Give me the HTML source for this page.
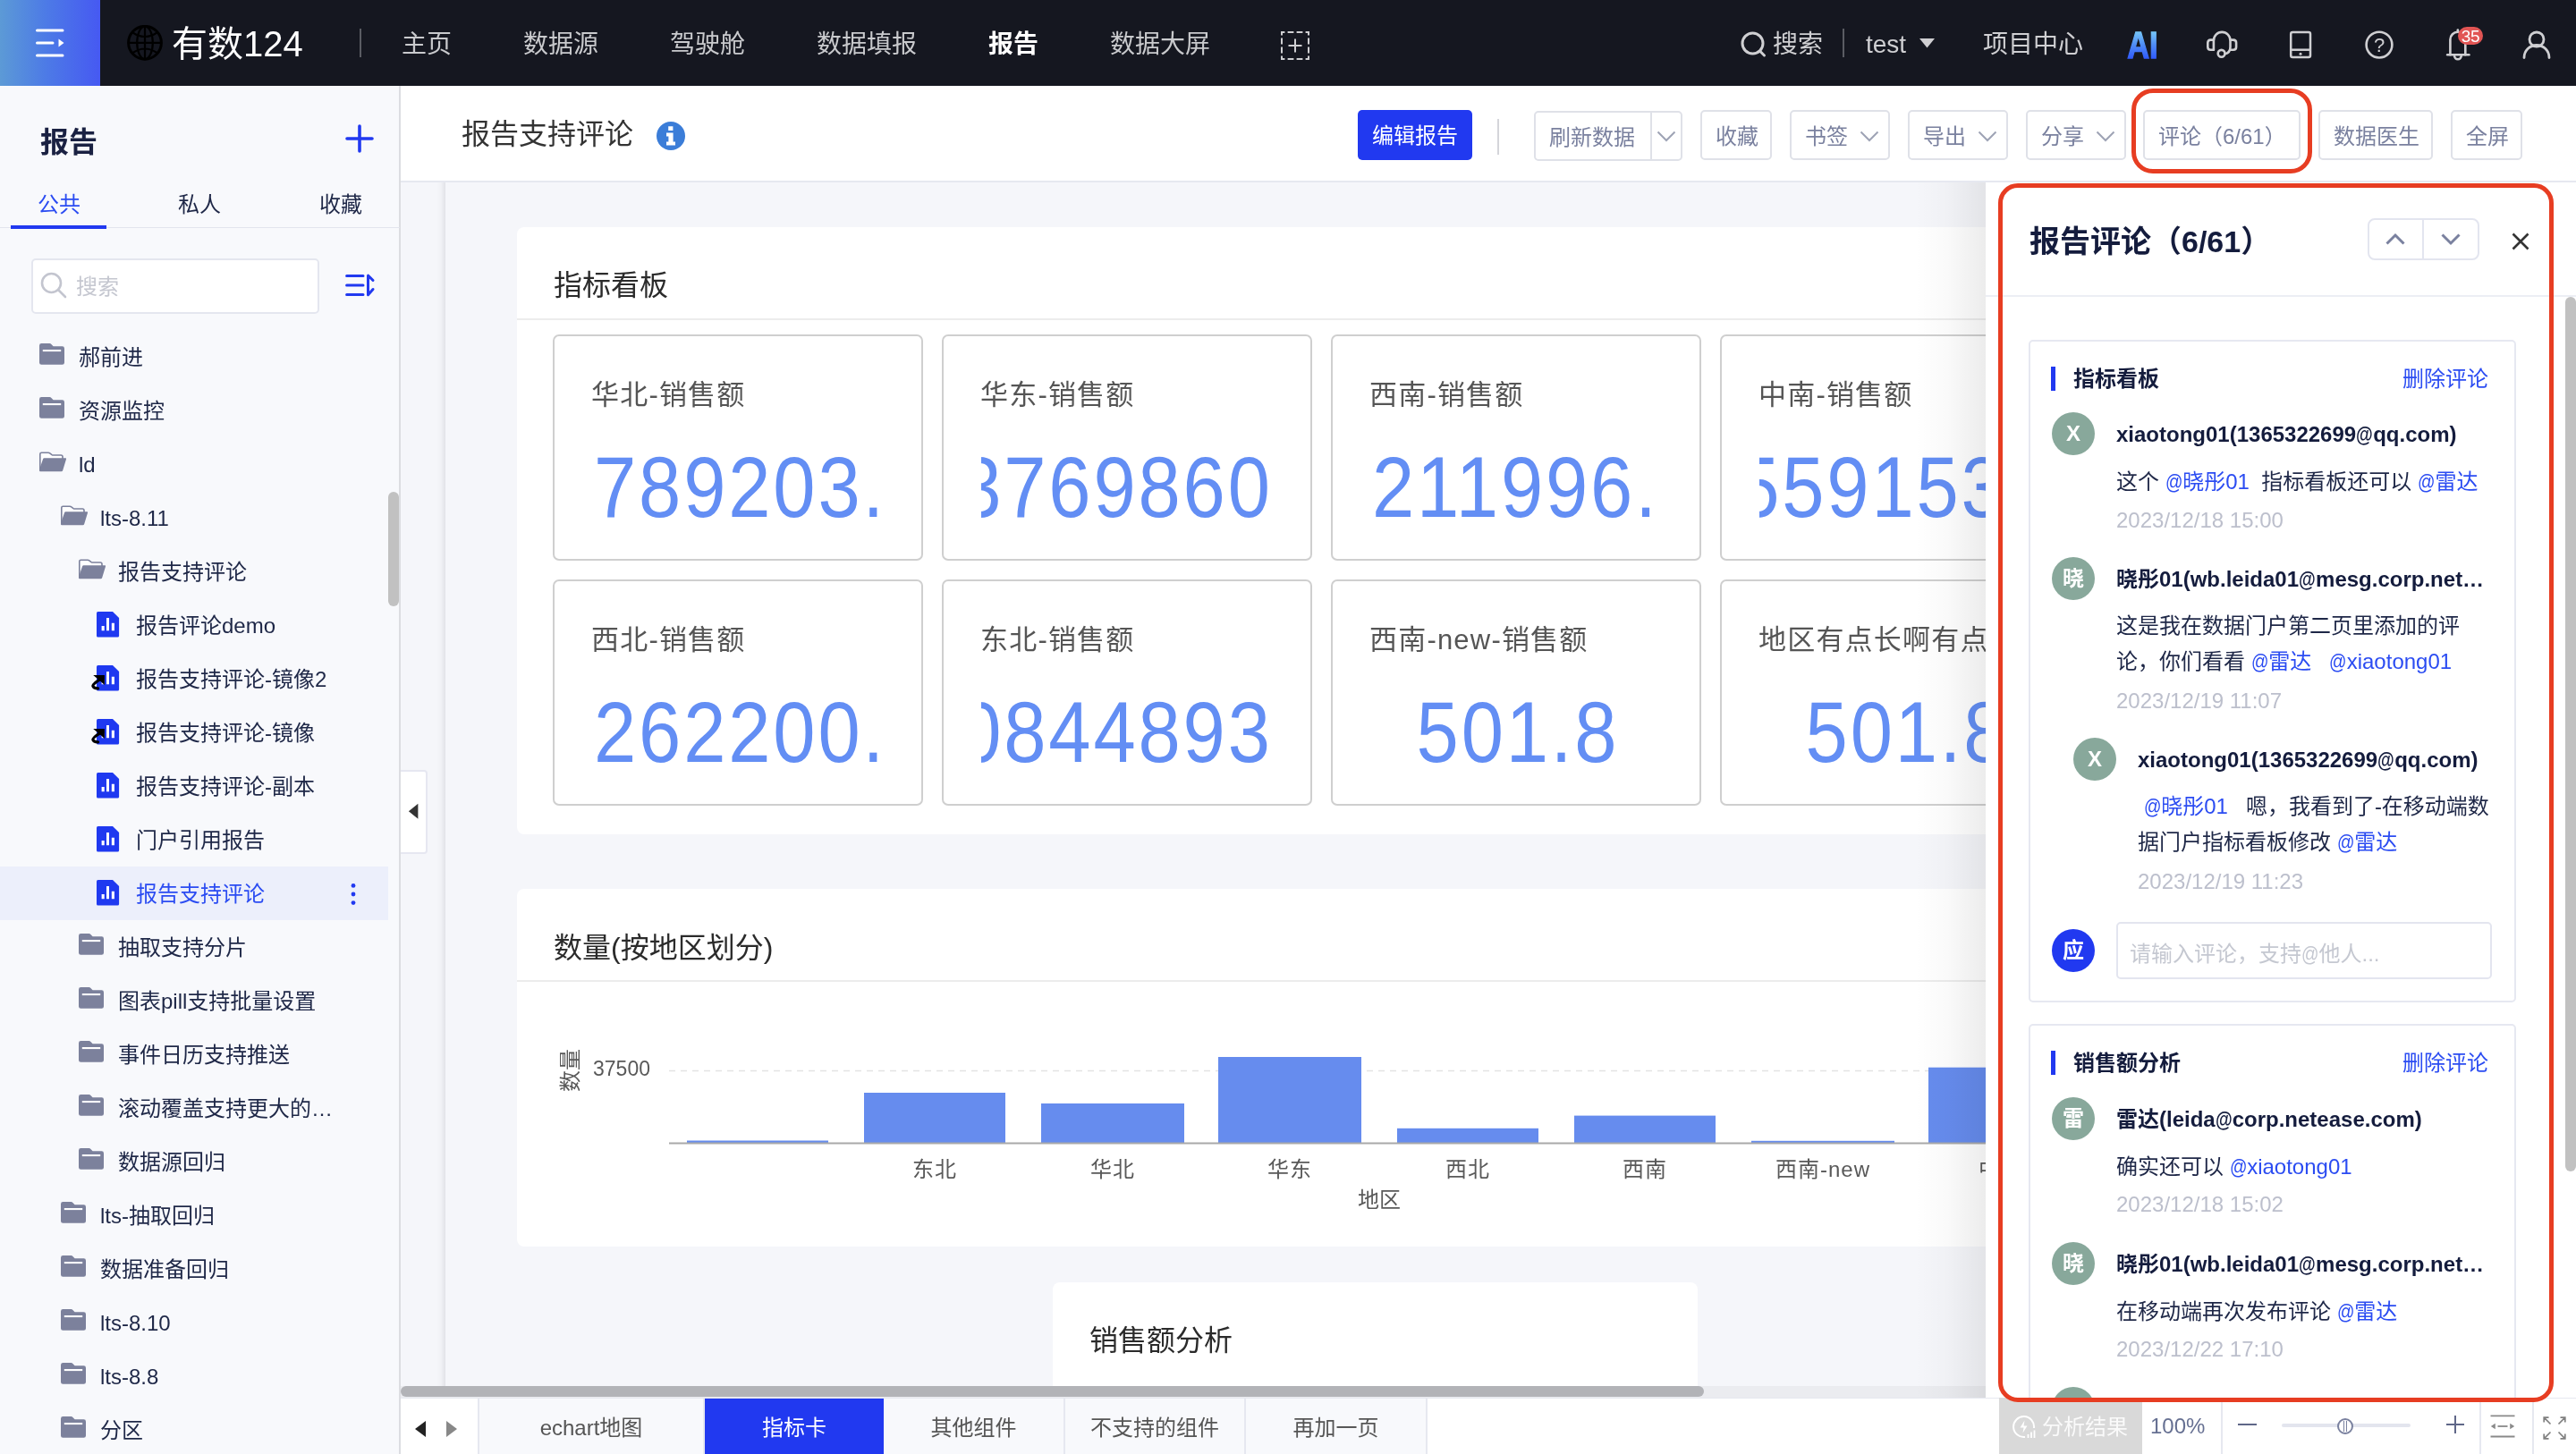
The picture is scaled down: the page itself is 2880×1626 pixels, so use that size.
<!DOCTYPE html><html lang="zh-CN"><head><meta charset="utf-8"><title>报告支持评论</title><style>
*{box-sizing:border-box;margin:0;padding:0}
html,body{width:2880px;height:1626px;overflow:hidden;background:#fff}
body{font-family:"Liberation Sans","Noto Sans CJK SC",sans-serif;color:#1e2747;position:relative;filter:opacity(1)}
.a{position:absolute}
.t{position:absolute;white-space:nowrap}
#nav{left:0;top:0;width:2880px;height:96px;background:#151720}
#menu{left:0;top:0;width:112px;height:96px;background:linear-gradient(90deg,#5c9ad6 0%,#4d7be6 45%,#4659f2 100%)}
.nv{font-size:28px;line-height:40px;top:30px;color:#c9cacd}
.nv.on{color:#fff;font-weight:700}
#side{left:0;top:96px;width:448px;height:1530px;background:#f8f9fc;border-right:2px solid #dcdde1}
.row{position:absolute;left:0;width:434px;height:60px}
.row .lb{position:absolute;top:14px;font-size:24px;line-height:34px;white-space:nowrap;color:#1e2747}
.row svg{position:absolute}
.row.sel{background:#eceffb}
.row.sel .lb{color:#2b4cf2}
#head{left:448px;top:96px;width:2432px;height:108px;background:#fff;border-bottom:2px solid #e6e8f0}
.btn{position:absolute;top:123px;height:56px;border:2px solid #dfe1e8;border-radius:5px;background:#fff;font-size:24px;line-height:55px;color:#7a819f;white-space:nowrap;padding-left:15px}
#main{left:448px;top:204px;width:1772px;height:1359px;background:#f5f6fa;overflow:hidden}
.card{position:absolute;background:#fff;border-radius:8px}
.ct{position:absolute;margin-top:1px;font-size:32px;line-height:44px;color:#2b2b2b;white-space:nowrap}
.kpi{position:absolute;width:414px;height:253px;border:2px solid #cfcfcf;border-radius:7px;background:#fff;overflow:hidden}
.kpi .kl{position:absolute;left:41px;top:44px;font-size:31px;line-height:44px;color:#555;white-space:nowrap;letter-spacing:1.200px}
.kpi .kb{position:absolute;left:42px;top:109px;width:330px;height:120px;overflow:hidden}
.kpi .kn{position:absolute;top:0;font-size:96px;line-height:120px;color:#638ef4;white-space:nowrap;transform:scaleX(.885);letter-spacing:3.200px}
#panel{left:2220px;top:204px;width:660px;height:1359px;background:#fff;overflow:hidden}
.cc{position:absolute;left:48px;width:545px;border:2px solid #e6e8f1;border-radius:5px;background:#fff}
.av{position:absolute;width:48px;height:48px;border-radius:24px;background:#88a89b;color:#fff;font-size:24px;line-height:48px;text-align:center;font-weight:700}
.un{position:absolute;font-size:24px;line-height:34px;font-weight:700;color:#141c3d;white-space:nowrap}
.cm{position:absolute;font-size:24px;line-height:40px;color:#1e2747}
.cm b{font-weight:400;color:#2b4cf2}
.at{display:inline-block;font-style:normal;width:19.500px;transform:scaleX(.8);transform-origin:0 50%}
.un .at{width:19px}
.ts{position:absolute;font-size:24px;line-height:34px;color:#bcbfcc;white-space:nowrap}
.ch{position:absolute;font-size:24px;line-height:34px;font-weight:700;color:#141c3d;white-space:nowrap}
.del{position:absolute;font-size:24px;line-height:34px;color:#2b4cf2;white-space:nowrap}
.bar{position:absolute;width:5px;height:27px;background:#2139f0}
#foot{left:448px;top:1563px;width:2432px;height:63px;background:#fff;border-top:1px solid #e6e8f0}
.tab{position:absolute;top:0;height:63px;background:#f8f9fc;border-right:2px solid #e6e8f0;font-size:24px;line-height:66px;text-align:center;color:#555;white-space:nowrap}
.tab.on{background:#2139f0;color:#fff;border-right:none}
</style></head><body>
<div id="nav" class="a">
<div id="menu" class="a"><svg class="a" style="left:38px;top:30px" width="36" height="36" viewBox="0 0 36 36" fill="none" stroke="#fff" stroke-width="3" stroke-linecap="round"><path d="M3.5 4H32M3.5 18H21M3.5 32H32"/><path d="M27.5 13.5L33.5 18L27.5 22.5Z" fill="#fff" stroke="none"/></svg></div>
<svg class="a" style="left:142px;top:28px" width="40" height="40" viewBox="0 0 40 40" fill="none" stroke="#000" stroke-width="2.200"><circle cx="20" cy="19.800" r="18.400" stroke-width="3"/><ellipse cx="20" cy="19.800" rx="8.800" ry="18.400"/><path d="M20 1.500V38M1.500 19.800H38.500M6.500 8.500Q20 17.500 33.500 8.500M6.500 31Q20 22 33.500 31"/></svg>
<div class="t" style="left:192px;top:21px;font-size:40px;line-height:56px;color:#fff">有数124</div>
<div class="a" style="left:402px;top:32px;width:2px;height:32px;background:#5a5c63"></div>
<div class="t nv" style="left:449px">主页</div>
<div class="t nv" style="left:585px">数据源</div>
<div class="t nv" style="left:749px">驾驶舱</div>
<div class="t nv" style="left:913px">数据填报</div>
<div class="t nv on" style="left:1105px">报告</div>
<div class="t nv" style="left:1241px">数据大屏</div>
<svg class="a" style="left:1431px;top:34px" width="34" height="34" viewBox="0 0 34 34" fill="none" stroke="#cfcfd2" stroke-width="2"><rect x="2" y="2" width="30" height="30" stroke-dasharray="6.800 3.200" stroke-dashoffset="3.400"/><path d="M9.5 17H24.5M17 9.5V24.5"/></svg>
<svg class="a" style="left:1944px;top:33px" width="34" height="34" viewBox="0 0 34 34" fill="none" stroke="#cfcfd2" stroke-width="3" stroke-linecap="round"><circle cx="15.5" cy="15.5" r="11.5"/><path d="M24 24.5L28.5 29"/></svg>
<div class="t nv" style="left:1982px;color:#cfcfd2">搜索</div>
<div class="a" style="left:2060px;top:32px;width:2px;height:32px;background:#5a5c63"></div>
<div class="t nv" style="left:2086px;color:#cfcfd2">test</div>
<svg class="a" style="left:2146px;top:43px" width="18" height="11" viewBox="0 0 18 11"><path d="M0 0H17L8.5 10.5Z" fill="#cfcfd2"/></svg>
<div class="t nv" style="left:2217px;color:#cfcfd2">项目中心</div>
<svg class="a" style="left:2374px;top:30px" width="46" height="40" viewBox="0 0 46 40"><defs><linearGradient id="aig" x1="0" y1="0" x2="0" y2="1"><stop offset="0" stop-color="#8eeaf8"/><stop offset=".5" stop-color="#4f8cf6"/><stop offset="1" stop-color="#1f3fff"/></linearGradient></defs><text x="4.200" y="34.600" font-family="Liberation Sans,sans-serif" font-weight="700" font-size="41.600" fill="url(#aig)" stroke="url(#aig)" stroke-width="1.400" textLength="34.400" lengthAdjust="spacingAndGlyphs">AI</text></svg>
<svg class="a" style="left:2466px;top:32px" width="36" height="36" viewBox="0 0 36 36" fill="none" stroke="#cfcfd2" stroke-width="2.600" stroke-linecap="round" stroke-linejoin="round"><path d="M8.900 23.700V13.400A9.300 9.500 0 0 1 27.500 13.400V20.500Q27.500 27 21.600 28.300"/><path d="M8.900 12.600H5.500Q2.300 12.600 2.300 15.800V20.500Q2.300 23.700 5.500 23.700H8.900M27.500 12.600H30.900Q34.100 12.600 34.100 15.800V20.500Q34.100 23.700 30.900 23.700H27.500"/><circle cx="17.600" cy="27.800" r="3.900"/></svg>
<svg class="a" style="left:2558px;top:33px" width="28" height="34" viewBox="0 0 28 34" fill="none" stroke="#cfcfd2" stroke-width="2.500" stroke-linejoin="round"><rect x="3.200" y="2.900" width="21.800" height="28.200" rx="2"/><path d="M3.200 22.700H25"/><circle cx="14" cy="27.200" r="1.500" fill="#cfcfd2" stroke="none"/></svg>
<svg class="a" style="left:2643px;top:33px" width="34" height="34" viewBox="0 0 34 34" fill="none" stroke="#cfcfd2" stroke-width="2.6"><circle cx="17" cy="17.100" r="14.400"/><text x="17" y="25" text-anchor="middle" font-family="Liberation Sans,sans-serif" font-size="22" fill="#cfcfd2" stroke="none">?</text></svg>
<svg class="a" style="left:2734px;top:32px" width="30" height="38" viewBox="0 0 30 38" fill="none" stroke="#cfcfd2" stroke-width="2.600" stroke-linecap="round" stroke-linejoin="round"><path d="M2.200 29.300H26.400"/><path d="M5.400 29.300V12.250A8.450 8.450 0 0 1 22.300 12.250V29.300"/><path d="M13.850 1.600V3.600"/><path d="M10 30A3.900 4.300 0 0 0 17.800 30"/></svg>
<div class="a" style="left:2748px;top:30px;width:28px;height:20px;border-radius:10px;background:#e15554;color:#fff;font-size:19px;line-height:21px;text-align:center;letter-spacing:-.300px">35</div>
<svg class="a" style="left:2820px;top:34px" width="32" height="32" viewBox="0 0 32 32" fill="none" stroke="#cfcfd2" stroke-width="2.8" stroke-linecap="round"><circle cx="16" cy="10" r="8"/><path d="M2 30.5A14 14 0 0 1 30 30.5"/></svg>
</div>
<div id="side" class="a">
<div class="t" style="left:45px;top:40px;font-size:32px;line-height:46px;font-weight:700;color:#1a2142">报告</div>
<svg class="a" style="left:386px;top:43px" width="32" height="32" viewBox="0 0 32 32" stroke="#2139f0" stroke-width="3.6" stroke-linecap="round"><path d="M2 16H30M16 2V30"/></svg>
<div class="t" style="left:42px;top:116px;font-size:24px;line-height:34px;color:#2b4cf2">公共</div>
<div class="t" style="left:199px;top:116px;font-size:24px;line-height:34px;color:#1e2747">私人</div>
<div class="t" style="left:357px;top:116px;font-size:24px;line-height:34px;color:#1e2747">收藏</div>
<div class="a" style="left:0;top:158px;width:447px;height:1px;background:#e3e5ed"></div>
<div class="a" style="left:12px;top:156px;width:107px;height:4px;background:#2139f0"></div>
<div class="a" style="left:35px;top:193px;width:322px;height:62px;border:2px solid #e4e6ef;border-radius:5px;background:#fff"></div>
<svg class="a" style="left:45px;top:208px" width="30" height="30" viewBox="0 0 30 30" fill="none" stroke="#c3c5cf" stroke-width="2.6" stroke-linecap="round"><circle cx="12.5" cy="12.5" r="10.5"/><path d="M20.5 20.5L28 28"/></svg>
<div class="t" style="left:85px;top:208px;font-size:24px;line-height:34px;color:#c5c7d0">搜索</div>
<svg class="a" style="left:384px;top:208px" width="36" height="30" viewBox="0 0 36 30" fill="none" stroke="#2139f0" stroke-width="3" stroke-linecap="round" stroke-linejoin="round"><path d="M3.600 4.400H22M3.600 14.900H22M3.600 25.500H22"/><path d="M33 9.500L27.500 4.200V25.800L33 19.500"/></svg>
<div class="row" style="top:273px">
<svg style="left:44px;top:15px" width="28" height="24" viewBox="0 0 28 24"><path d="M0 2.400Q0 0 2.400 0H11.400Q12.600 0 13.400 .9L15.600 3.300H25.600Q28 3.300 28 5.700V21.400Q28 23.800 25.600 23.800H2.400Q0 23.800 0 21.400Z" fill="#7c819c"/><rect x="3.800" y="7" width="20.400" height="2.100" fill="#fff"/></svg>
<span class="lb" style="left:88px">郝前进</span>
</div>
<div class="row" style="top:333px">
<svg style="left:44px;top:15px" width="28" height="24" viewBox="0 0 28 24"><path d="M0 2.400Q0 0 2.400 0H11.400Q12.600 0 13.400 .9L15.600 3.300H25.600Q28 3.300 28 5.700V21.400Q28 23.800 25.600 23.800H2.400Q0 23.800 0 21.400Z" fill="#7c819c"/><rect x="3.800" y="7" width="20.400" height="2.100" fill="#fff"/></svg>
<span class="lb" style="left:88px">资源监控</span>
</div>
<div class="row" style="top:393px">
<svg style="left:43px;top:15px" width="32" height="24" viewBox="0 0 32 24"><path d="M1.800 21.500V3.800Q1.800 2.200 3.400 2.200H11Q12 2.200 12.800 2.900L15 4.600Q15.600 5 16.600 5H25.200Q27 5 27 6.800V9" fill="#fff" stroke="#7c819c" stroke-width="1.600"/><path d="M6.400 8.300H30.200Q31.400 8.300 31 9.500L27.200 22Q26.800 23.200 25.600 23.200H2Q1 23.200 1 22.200V21L5 9.400Q5.400 8.300 6.400 8.300Z" fill="#7c819c"/></svg>
<span class="lb" style="left:88px">ld</span>
</div>
<div class="row" style="top:453px">
<svg style="left:67px;top:15px" width="32" height="24" viewBox="0 0 32 24"><path d="M1.800 21.500V3.800Q1.800 2.200 3.400 2.200H11Q12 2.200 12.800 2.900L15 4.600Q15.600 5 16.600 5H25.200Q27 5 27 6.800V9" fill="#fff" stroke="#7c819c" stroke-width="1.600"/><path d="M6.400 8.300H30.200Q31.400 8.300 31 9.500L27.200 22Q26.800 23.200 25.600 23.200H2Q1 23.200 1 22.200V21L5 9.400Q5.400 8.300 6.400 8.300Z" fill="#7c819c"/></svg>
<span class="lb" style="left:112px">lts-8.11</span>
</div>
<div class="row" style="top:513px">
<svg style="left:87px;top:15px" width="32" height="24" viewBox="0 0 32 24"><path d="M1.800 21.500V3.800Q1.800 2.200 3.400 2.200H11Q12 2.200 12.800 2.900L15 4.600Q15.600 5 16.600 5H25.200Q27 5 27 6.800V9" fill="#fff" stroke="#7c819c" stroke-width="1.600"/><path d="M6.400 8.300H30.200Q31.400 8.300 31 9.500L27.200 22Q26.800 23.200 25.600 23.200H2Q1 23.200 1 22.200V21L5 9.400Q5.400 8.300 6.400 8.300Z" fill="#7c819c"/></svg>
<span class="lb" style="left:132px">报告支持评论</span>
</div>
<div class="row" style="top:573px">
<svg style="left:108px;top:15px" width="26" height="29" viewBox="0 0 26 29"><path d="M1.600 0H18L25.100 7.100V27Q25.100 28.600 23.500 28.600H1.600Q0 28.600 0 27V1.600Q0 0 1.600 0Z" fill="#1f39f0"/><path d="M5.600 15.900h3.100v5.400h-3.100zM11 6.900h3v14.400h-3zM16.800 12.700h3.100v8.600h-3.100z" fill="#fff"/></svg>
<span class="lb" style="left:152px">报告评论demo</span>
</div>
<div class="row" style="top:633px">
<svg style="left:108px;top:15px" width="26" height="29" viewBox="0 0 26 29"><path d="M1.600 0H18L25.100 7.100V27Q25.100 28.600 23.500 28.600H1.600Q0 28.600 0 27V1.600Q0 0 1.600 0Z" fill="#1f39f0"/><path d="M5.600 15.900h3.100v5.400h-3.100zM11 6.900h3v14.400h-3zM16.800 12.700h3.100v8.600h-3.100z" fill="#fff"/></svg>
<svg style="left:102px;top:25px" width="17" height="18" viewBox="0 0 17 18"><path d="M2.200 .9H14.900V12L10.800 8.200L6.400 4.400Z" fill="#000"/><path d="M9.200 6.200Q1.400 11.400 1.900 13.200Q2.600 15.600 7.600 15.800" stroke="#000" stroke-width="3.200" fill="none" stroke-linecap="round"/></svg>
<span class="lb" style="left:152px">报告支持评论-镜像2</span>
</div>
<div class="row" style="top:693px">
<svg style="left:108px;top:15px" width="26" height="29" viewBox="0 0 26 29"><path d="M1.600 0H18L25.100 7.100V27Q25.100 28.600 23.500 28.600H1.600Q0 28.600 0 27V1.600Q0 0 1.600 0Z" fill="#1f39f0"/><path d="M5.600 15.900h3.100v5.400h-3.100zM11 6.900h3v14.400h-3zM16.800 12.700h3.100v8.600h-3.100z" fill="#fff"/></svg>
<svg style="left:102px;top:25px" width="17" height="18" viewBox="0 0 17 18"><path d="M2.200 .9H14.900V12L10.800 8.200L6.400 4.400Z" fill="#000"/><path d="M9.200 6.200Q1.400 11.400 1.900 13.200Q2.600 15.600 7.600 15.800" stroke="#000" stroke-width="3.200" fill="none" stroke-linecap="round"/></svg>
<span class="lb" style="left:152px">报告支持评论-镜像</span>
</div>
<div class="row" style="top:753px">
<svg style="left:108px;top:15px" width="26" height="29" viewBox="0 0 26 29"><path d="M1.600 0H18L25.100 7.100V27Q25.100 28.600 23.500 28.600H1.600Q0 28.600 0 27V1.600Q0 0 1.600 0Z" fill="#1f39f0"/><path d="M5.600 15.900h3.100v5.400h-3.100zM11 6.900h3v14.400h-3zM16.800 12.700h3.100v8.600h-3.100z" fill="#fff"/></svg>
<span class="lb" style="left:152px">报告支持评论-副本</span>
</div>
<div class="row" style="top:813px">
<svg style="left:108px;top:15px" width="26" height="29" viewBox="0 0 26 29"><path d="M1.600 0H18L25.100 7.100V27Q25.100 28.600 23.500 28.600H1.600Q0 28.600 0 27V1.600Q0 0 1.600 0Z" fill="#1f39f0"/><path d="M5.600 15.900h3.100v5.400h-3.100zM11 6.900h3v14.400h-3zM16.800 12.700h3.100v8.600h-3.100z" fill="#fff"/></svg>
<span class="lb" style="left:152px">门户引用报告</span>
</div>
<div class="row sel" style="top:873px">
<svg style="left:108px;top:15px" width="26" height="29" viewBox="0 0 26 29"><path d="M1.600 0H18L25.100 7.100V27Q25.100 28.600 23.500 28.600H1.600Q0 28.600 0 27V1.600Q0 0 1.600 0Z" fill="#1f39f0"/><path d="M5.600 15.900h3.100v5.400h-3.100zM11 6.900h3v14.400h-3zM16.800 12.700h3.100v8.600h-3.100z" fill="#fff"/></svg>
<span class="lb" style="left:152px">报告支持评论</span>
<svg style="left:391px;top:18px" width="8" height="26" viewBox="0 0 8 26" fill="#2139f0"><circle cx="4" cy="3.400" r="2.400"/><circle cx="4" cy="13" r="2.400"/><circle cx="4" cy="22.600" r="2.400"/></svg>
</div>
<div class="row" style="top:933px">
<svg style="left:88px;top:15px" width="28" height="24" viewBox="0 0 28 24"><path d="M0 2.400Q0 0 2.400 0H11.400Q12.600 0 13.400 .9L15.600 3.300H25.600Q28 3.300 28 5.700V21.400Q28 23.800 25.600 23.800H2.400Q0 23.800 0 21.400Z" fill="#7c819c"/><rect x="3.800" y="7" width="20.400" height="2.100" fill="#fff"/></svg>
<span class="lb" style="left:132px">抽取支持分片</span>
</div>
<div class="row" style="top:993px">
<svg style="left:88px;top:15px" width="28" height="24" viewBox="0 0 28 24"><path d="M0 2.400Q0 0 2.400 0H11.400Q12.600 0 13.400 .9L15.600 3.300H25.600Q28 3.300 28 5.700V21.400Q28 23.800 25.600 23.800H2.400Q0 23.800 0 21.400Z" fill="#7c819c"/><rect x="3.800" y="7" width="20.400" height="2.100" fill="#fff"/></svg>
<span class="lb" style="left:132px">图表pill支持批量设置</span>
</div>
<div class="row" style="top:1053px">
<svg style="left:88px;top:15px" width="28" height="24" viewBox="0 0 28 24"><path d="M0 2.400Q0 0 2.400 0H11.400Q12.600 0 13.400 .9L15.600 3.300H25.600Q28 3.300 28 5.700V21.400Q28 23.800 25.600 23.800H2.400Q0 23.800 0 21.400Z" fill="#7c819c"/><rect x="3.800" y="7" width="20.400" height="2.100" fill="#fff"/></svg>
<span class="lb" style="left:132px">事件日历支持推送</span>
</div>
<div class="row" style="top:1113px">
<svg style="left:88px;top:15px" width="28" height="24" viewBox="0 0 28 24"><path d="M0 2.400Q0 0 2.400 0H11.400Q12.600 0 13.400 .9L15.600 3.300H25.600Q28 3.300 28 5.700V21.400Q28 23.800 25.600 23.800H2.400Q0 23.800 0 21.400Z" fill="#7c819c"/><rect x="3.800" y="7" width="20.400" height="2.100" fill="#fff"/></svg>
<span class="lb" style="left:132px">滚动覆盖支持更大的…</span>
</div>
<div class="row" style="top:1173px">
<svg style="left:88px;top:15px" width="28" height="24" viewBox="0 0 28 24"><path d="M0 2.400Q0 0 2.400 0H11.400Q12.600 0 13.400 .9L15.600 3.300H25.600Q28 3.300 28 5.700V21.400Q28 23.800 25.600 23.800H2.400Q0 23.800 0 21.400Z" fill="#7c819c"/><rect x="3.800" y="7" width="20.400" height="2.100" fill="#fff"/></svg>
<span class="lb" style="left:132px">数据源回归</span>
</div>
<div class="row" style="top:1233px">
<svg style="left:68px;top:15px" width="28" height="24" viewBox="0 0 28 24"><path d="M0 2.400Q0 0 2.400 0H11.400Q12.600 0 13.400 .9L15.600 3.300H25.600Q28 3.300 28 5.700V21.400Q28 23.800 25.600 23.800H2.400Q0 23.800 0 21.400Z" fill="#7c819c"/><rect x="3.800" y="7" width="20.400" height="2.100" fill="#fff"/></svg>
<span class="lb" style="left:112px">lts-抽取回归</span>
</div>
<div class="row" style="top:1293px">
<svg style="left:68px;top:15px" width="28" height="24" viewBox="0 0 28 24"><path d="M0 2.400Q0 0 2.400 0H11.400Q12.600 0 13.400 .9L15.600 3.300H25.600Q28 3.300 28 5.700V21.400Q28 23.800 25.600 23.800H2.400Q0 23.800 0 21.400Z" fill="#7c819c"/><rect x="3.800" y="7" width="20.400" height="2.100" fill="#fff"/></svg>
<span class="lb" style="left:112px">数据准备回归</span>
</div>
<div class="row" style="top:1353px">
<svg style="left:68px;top:15px" width="28" height="24" viewBox="0 0 28 24"><path d="M0 2.400Q0 0 2.400 0H11.400Q12.600 0 13.400 .9L15.600 3.300H25.600Q28 3.300 28 5.700V21.400Q28 23.800 25.600 23.800H2.400Q0 23.800 0 21.400Z" fill="#7c819c"/><rect x="3.800" y="7" width="20.400" height="2.100" fill="#fff"/></svg>
<span class="lb" style="left:112px">lts-8.10</span>
</div>
<div class="row" style="top:1413px">
<svg style="left:68px;top:15px" width="28" height="24" viewBox="0 0 28 24"><path d="M0 2.400Q0 0 2.400 0H11.400Q12.600 0 13.400 .9L15.600 3.300H25.600Q28 3.300 28 5.700V21.400Q28 23.800 25.600 23.800H2.400Q0 23.800 0 21.400Z" fill="#7c819c"/><rect x="3.800" y="7" width="20.400" height="2.100" fill="#fff"/></svg>
<span class="lb" style="left:112px">lts-8.8</span>
</div>
<div class="row" style="top:1473px">
<svg style="left:68px;top:15px" width="28" height="24" viewBox="0 0 28 24"><path d="M0 2.400Q0 0 2.400 0H11.400Q12.600 0 13.400 .9L15.600 3.300H25.600Q28 3.300 28 5.700V21.400Q28 23.800 25.600 23.800H2.400Q0 23.800 0 21.400Z" fill="#7c819c"/><rect x="3.800" y="7" width="20.400" height="2.100" fill="#fff"/></svg>
<span class="lb" style="left:112px">分区</span>
</div>
<div class="a" style="left:434px;top:454px;width:12px;height:128px;border-radius:6px;background:#c1c1c1"></div>
</div><div id="head" class="a"></div>
<div class="t" style="left:516px;top:127px;font-size:32px;line-height:46px;color:#333">报告支持评论</div>
<svg class="a" style="left:734px;top:136px" width="32" height="32" viewBox="0 0 32 32"><circle cx="16" cy="16" r="16" fill="#3b7dd8"/><path d="M13.200 5.200H18.400V10H13.200ZM11 12.400H18.600V22.400H21V26.400H11V22.400H13.400V16.400H11Z" fill="#fff"/></svg>
<div class="a" style="left:1518px;top:123px;width:128px;height:56px;border-radius:5px;background:#2139f0;color:#fff;font-size:24px;line-height:58px;text-align:center">编辑报告</div>
<div class="a" style="left:1674px;top:133px;width:2px;height:40px;background:#d4d5da"></div>
<div class="btn" style="left:1715px;width:166px;top:124px">刷新数据<div class="a" style="left:128px;top:0;width:2px;height:52px;background:#dfe1e8"></div></div>
<svg class="a" style="left:1852px;top:146px" width="22" height="14" viewBox="0 0 22 14" fill="none" stroke="#9ea3b5" stroke-width="2"><path d="M1.500 1.500L11 11L20.500 1.500"/></svg>
<div class="btn" style="left:1901px;width:80px">收藏</div>
<div class="btn" style="left:2001px;width:112px">书签</div>
<svg class="a" style="left:2079px;top:146px" width="22" height="14" viewBox="0 0 22 14" fill="none" stroke="#9ea3b5" stroke-width="2"><path d="M1.500 1.500L11 11L20.500 1.500"/></svg>
<div class="btn" style="left:2133px;width:112px">导出</div>
<svg class="a" style="left:2211px;top:146px" width="22" height="14" viewBox="0 0 22 14" fill="none" stroke="#9ea3b5" stroke-width="2"><path d="M1.500 1.500L11 11L20.500 1.500"/></svg>
<div class="btn" style="left:2265px;width:112px">分享</div>
<svg class="a" style="left:2343px;top:146px" width="22" height="14" viewBox="0 0 22 14" fill="none" stroke="#9ea3b5" stroke-width="2"><path d="M1.500 1.500L11 11L20.500 1.500"/></svg>
<div class="btn" style="left:2396px;width:176px">评论（6/61）</div>
<div class="btn" style="left:2592px;width:128px">数据医生</div>
<div class="btn" style="left:2740px;width:80px">全屏</div>
<div id="main" class="a">
<div class="a" style="left:0;top:0;width:50px;height:1359px;background:#f5f6fa"></div>
<div class="a" style="left:40px;top:0;width:10px;height:1359px;background:linear-gradient(90deg,rgba(0,0,20,0),rgba(0,0,20,.02) 50%,rgba(0,0,20,.08))"></div>
<div class="card" style="left:130px;top:50px;width:1800px;height:679px">
<div class="ct" style="left:41px;top:42px">指标看板</div>
<div class="a" style="left:0;top:102px;width:1800px;height:2px;background:#ececec"></div>
<div class="kpi" style="left:40px;top:120px"><div class="kl">华北-销售额</div><div class="kb"><div class="kn" style="left:2px;transform-origin:0 50%">789203.</div></div></div>
<div class="kpi" style="left:475px;top:120px"><div class="kl">华东-销售额</div><div class="kb"><div class="kn" style="right:4px;transform-origin:100% 50%">23769860</div></div></div>
<div class="kpi" style="left:910px;top:120px"><div class="kl">西南-销售额</div><div class="kb"><div class="kn" style="left:2px;transform-origin:0 50%">211996.</div></div></div>
<div class="kpi" style="left:1345px;top:120px"><div class="kl">中南-销售额</div><div class="kb"><div class="kn" style="right:4px;transform-origin:100% 50%">55591538</div></div></div>
<div class="kpi" style="left:40px;top:394px"><div class="kl">西北-销售额</div><div class="kb"><div class="kn" style="left:2px;transform-origin:0 50%">262200.</div></div></div>
<div class="kpi" style="left:475px;top:394px"><div class="kl">东北-销售额</div><div class="kb"><div class="kn" style="right:4px;transform-origin:100% 50%">10844893</div></div></div>
<div class="kpi" style="left:910px;top:394px"><div class="kl">西南-new-销售额</div><div class="kb"><div class="kn" style="left:50%;transform:translateX(-50%) scaleX(.885);transform-origin:50% 50%">501.8</div></div></div>
<div class="kpi" style="left:1345px;top:394px"><div class="kl">地区有点长啊有点长-销售额</div><div class="kb"><div class="kn" style="left:50%;transform:translateX(-50%) scaleX(.885);transform-origin:50% 50%">501.8</div></div></div>
</div>
<div class="card" style="left:130px;top:790px;width:1800px;height:400px">
<div class="ct" style="left:41px;top:43px">数量(按地区划分)</div>
<div class="a" style="left:0;top:102px;width:1800px;height:2px;background:#ececec"></div>
<svg class="a" style="left:0;top:104px" width="1800" height="296" viewBox="0 0 1800 296" font-family="Liberation Sans,Noto Sans CJK SC,sans-serif"><path d="M170 99.500H1800" stroke="#e3e3e3" stroke-width="1.600" stroke-dasharray="7 6" fill="none"/><rect x="190" y="177.5" width="158" height="2.5" fill="#668cee"/><rect x="388" y="124" width="158" height="56" fill="#668cee"/><rect x="586" y="136" width="160" height="44" fill="#668cee"/><rect x="784" y="84" width="160" height="96" fill="#668cee"/><rect x="984" y="163.8" width="158" height="16.2" fill="#668cee"/><rect x="1182" y="149.6" width="158" height="30.4" fill="#668cee"/><rect x="1380" y="177.8" width="160" height="2.2" fill="#668cee"/><rect x="1578" y="95.7" width="162" height="84.3" fill="#668cee"/><path d="M170 180.500H1800" stroke="#a9a9a9" stroke-width="2" fill="none"/><text x="149" y="105.200" text-anchor="end" font-size="23" fill="#595959">37500</text><text transform="translate(60,99) rotate(-90)" text-anchor="middle" font-size="24" fill="#595959" dy="8">数量</text><text x="467" y="218" text-anchor="middle" font-size="24" fill="#595959" letter-spacing="1">东北</text><text x="666" y="218" text-anchor="middle" font-size="24" fill="#595959" letter-spacing="1">华北</text><text x="864" y="218" text-anchor="middle" font-size="24" fill="#595959" letter-spacing="1">华东</text><text x="1063" y="218" text-anchor="middle" font-size="24" fill="#595959" letter-spacing="1">西北</text><text x="1261" y="218" text-anchor="middle" font-size="24" fill="#595959" letter-spacing="1">西南</text><text x="1460" y="218" text-anchor="middle" font-size="24" fill="#595959" letter-spacing="1">西南-new</text><text x="1659" y="218" text-anchor="middle" font-size="24" fill="#595959" letter-spacing="1">中南</text><text x="964" y="252" text-anchor="middle" font-size="24" fill="#595959">地区</text></svg>
</div>
<div class="card" style="left:729px;top:1230px;width:721px;height:200px"><div class="ct" style="left:41px;top:42px">销售额分析</div></div>
<div class="a" style="left:0;top:1346px;width:1772px;height:13px;background:#ebecf0"></div>
<div class="a" style="left:0;top:1346px;width:1457px;height:12px;border-radius:6px;background:#b2b3b7"></div>
<div class="a" style="left:1692px;top:0;width:80px;height:1359px;background:linear-gradient(90deg,rgba(0,0,0,0),rgba(0,0,0,.02) 45%,rgba(0,0,0,.075))"></div>
</div>
<div class="a" style="left:448px;top:861px;width:30px;height:94px;background:#fff;border:2px solid #e6e7f1;border-left:none;border-radius:0 4px 4px 0"></div>
<svg class="a" style="left:456px;top:898px" width="12" height="18" viewBox="0 0 12 18"><path d="M11.400 .8V17.800L.9 9.300Z" fill="#333"/></svg><div id="panel" class="a">
<div class="t" style="left:49px;top:43px;font-size:34px;line-height:46px;font-weight:700;color:#141c3d">报告评论（6/61）</div>
<div class="a" style="left:427px;top:40px;width:125px;height:47px;border:2px solid #e3e5ef;border-radius:8px"></div>
<div class="a" style="left:488px;top:41px;width:2px;height:45px;background:#e3e5ef"></div>
<svg class="a" style="left:447px;top:56px" width="22" height="14" viewBox="0 0 22 14" fill="none" stroke="#7a819f" stroke-width="3"><path d="M1.500 12.500L11 3L20.500 12.500"/></svg>
<svg class="a" style="left:509px;top:57px" width="22" height="14" viewBox="0 0 22 14" fill="none" stroke="#7a819f" stroke-width="3"><path d="M1.500 1.500L11 11L20.500 1.500"/></svg>
<svg class="a" style="left:588px;top:56px" width="20" height="20" viewBox="0 0 20 20" fill="none" stroke="#333" stroke-width="2.600"><path d="M1.500 1.500L18.500 18.500M18.500 1.500L1.500 18.500"/></svg>
<div class="a" style="left:0;top:126px;width:660px;height:2px;background:#eceef4"></div>
<div class="a" style="left:648px;top:128px;width:12px;height:978px;border-radius:6px;background:#c1c1c1"></div>
<div class="cc" style="top:176px;height:741px"></div>
<div class="bar" style="left:73px;top:206px"></div>
<div class="ch" style="left:98px;top:203px">指标看板</div>
<div class="del" style="right:98px;top:203px">删除评论</div>
<div class="av" style="left:74px;top:257px">X</div>
<div class="un" style="left:146px;top:265px">xiaotong01(1365322699<i class="at">@</i>qq.com)</div>
<div class="cm" style="left:146px;top:315px;width:416px">这个 <b><i class="at">@</i>晓彤01</b>&nbsp; 指标看板还可以 <b><i class="at">@</i>雷达</b></div>
<div class="ts" style="left:146px;top:361px">2023/12/18 15:00</div>
<div class="av" style="left:74px;top:419px">晓</div>
<div class="un" style="left:146px;top:427px">晓彤01(wb.leida01<i class="at">@</i>mesg.corp.net…</div>
<div class="cm" style="left:146px;top:476px;width:416px">这是我在数据门户第二页里添加的评论，你们看看 <b><i class="at">@</i>雷达</b>&nbsp;&nbsp; <b><i class="at">@</i>xiaotong01</b></div>
<div class="ts" style="left:146px;top:563px">2023/12/19 11:07</div>
<div class="av" style="left:98px;top:621px">X</div>
<div class="un" style="left:170px;top:629px">xiaotong01(1365322699<i class="at">@</i>qq.com)</div>
<div class="cm" style="left:170px;top:678px;width:396px">&nbsp;<b><i class="at">@</i>晓彤01</b>&nbsp;&nbsp; 嗯，我看到了-在移动端数据门户指标看板修改 <b><i class="at">@</i>雷达</b></div>
<div class="ts" style="left:170px;top:765px">2023/12/19 11:23</div>
<div class="av" style="left:74px;top:835px;background:#2139f0">应</div>
<div class="a" style="left:146px;top:827px;width:420px;height:64px;border:2px solid #e3e5ef;border-radius:5px"></div>
<div class="t" style="left:161px;top:846px;font-size:24px;line-height:34px;color:#c5c8d1">请输入评论，支持<i class="at">@</i>他人...</div>
<div class="cc" style="top:941px;height:600px"></div>
<div class="bar" style="left:73px;top:971px"></div>
<div class="ch" style="left:98px;top:968px">销售额分析</div>
<div class="del" style="right:98px;top:968px">删除评论</div>
<div class="av" style="left:74px;top:1023px">雷</div>
<div class="un" style="left:146px;top:1031px">雷达(leida<i class="at">@</i>corp.netease.com)</div>
<div class="cm" style="left:146px;top:1081px;width:416px">确实还可以 <b><i class="at">@</i>xiaotong01</b></div>
<div class="ts" style="left:146px;top:1126px">2023/12/18 15:02</div>
<div class="av" style="left:74px;top:1185px">晓</div>
<div class="un" style="left:146px;top:1193px">晓彤01(wb.leida01<i class="at">@</i>mesg.corp.net…</div>
<div class="cm" style="left:146px;top:1243px;width:416px">在移动端再次发布评论 <b><i class="at">@</i>雷达</b></div>
<div class="ts" style="left:146px;top:1288px">2023/12/22 17:10</div>
<div class="av" style="left:74px;top:1347px">X</div>
</div>
<div id="foot" class="a">
<svg class="a" style="left:15px;top:24px" width="14" height="20" viewBox="0 0 14 20"><path d="M13 1V19L1 10Z" fill="#222"/></svg>
<svg class="a" style="left:50px;top:24px" width="14" height="20" viewBox="0 0 14 20"><path d="M1 1V19L13 10Z" fill="#888"/></svg>
<div class="a" style="left:86px;top:0;width:2px;height:63px;background:#e6e8f0"></div>
<div class="tab" style="left:88px;width:252px">echart地图</div>
<div class="tab on" style="left:340px;width:200px">指标卡</div>
<div class="tab" style="left:540px;width:203px">其他组件</div>
<div class="tab" style="left:743px;width:202px">不支持的组件</div>
<div class="tab" style="left:945px;width:203px">再加一页</div>
<div class="a" style="left:1787px;top:-1px;width:160px;height:64px;background:#d9d9d9"></div>
<svg class="a" style="left:1802px;top:19px" width="26" height="26" viewBox="0 0 26 26" fill="none" stroke="#fff" stroke-width="2"><path d="M14 24A11.500 11.500 0 1 1 24 14"/><path d="M13.500 5.500L8.500 13.500H12.500L11.500 19.500L16.500 11.500H12.500Z" fill="#fff" stroke="none"/><path d="M17.500 25V21M21 25V18.500M24.500 25V16.500" stroke-width="1.800"/></svg>
<div class="t" style="left:1835px;top:15px;font-size:24px;line-height:34px;color:#fafafa">分析结果</div>
<div class="t" style="left:1956px;top:13px;font-size:24px;line-height:36px;color:#667092">100%</div>
<div class="a" style="left:2035px;top:0;width:2px;height:63px;background:#e6e8f0"></div>
<div class="a" style="left:2054px;top:28px;width:21px;height:2px;background:#5f6788"></div>
<div class="a" style="left:2103px;top:28px;width:144px;height:4px;border-radius:2px;background:#e3e5ee"></div>
<div class="a" style="left:2165px;top:22px;width:18px;height:18px;border-radius:9px;border:2px solid #7a819f;background:#fff"></div>
<div class="a" style="left:2172px;top:25px;width:4px;height:12px;border-left:1px solid #7a819f;border-right:1px solid #7a819f"></div>
<svg class="a" style="left:2286px;top:18px" width="22" height="22" viewBox="0 0 22 22" stroke="#5f6788" stroke-width="2"><path d="M1 11H21M11 1V21"/></svg>
<div class="a" style="left:2324px;top:0;width:2px;height:63px;background:#e6e8f0"></div>
<svg class="a" style="left:2336px;top:17.500px" width="28" height="26" viewBox="0 0 28 26" fill="none" stroke="#8a8a8a" stroke-width="1.800"><path d="M.5 1.400H27.500M.5 24.500H27.500"/><path d="M8.500 13H19.500" /><path d="M.8 13L5.800 9.800V16.200ZM27.200 13L22.200 9.800V16.200Z" fill="#8a8a8a" stroke="none"/></svg>
<div class="a" style="left:2383px;top:0;width:2px;height:63px;background:#e6e8f0"></div>
<svg class="a" style="left:2395px;top:19.500px" width="26" height="26" viewBox="0 0 26 26" fill="none" stroke="#808080" stroke-width="1.700"><path d="M1.200 6.500V1.200H6.500M1.200 1.200L8.500 8.500M19.500 1.200H24.800V6.500M24.800 1.200L17.500 8.500M1.200 19.500V24.800H6.500M1.200 24.800L8.500 17.500M24.800 19.500V24.800H19.500M24.800 24.800L17.500 17.500"/></svg>
</div>
<div class="a" style="left:2383px;top:99px;width:202px;height:95px;border:5px solid #e73d22;border-radius:24px"></div>
<div class="a" style="left:2234px;top:205px;width:621px;height:1363px;border:5px solid #e73d22;border-radius:22px"></div>
</body></html>
